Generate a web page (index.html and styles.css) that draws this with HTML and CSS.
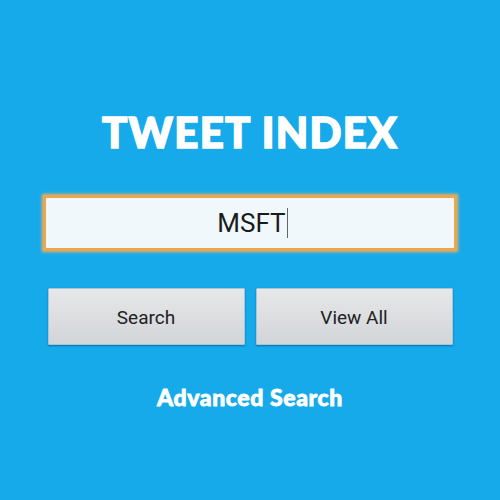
FILE: index.html
```html
<!DOCTYPE html>
<html>
<head>
<meta charset="utf-8">
<link rel="stylesheet" href="styles.css">
</head>
<body>
<main class="screen">
  <h1 class="title">TWEET INDEX</h1>
  <div class="field"><span class="value">MSFT</span><span class="caret"></span></div>
  <div class="actions">
    <button class="btn">Search</button>
    <button class="btn">View All</button>
  </div>
  <a class="advanced">Advanced Search</a>
</main>
</body>
</html>
```
FILE: styles.css
```css
html, body {
  margin: 0;
  padding: 0;
}
body {
  width: 500px;
  height: 500px;
  background: #16aaeb;
  overflow: hidden;
}
.screen {
  display: flex;
  flex-direction: column;
  align-items: center;
  padding-top: 108px;
}
.title {
  margin: 0;
  font-family: "Lato", sans-serif;
  font-weight: 900;
  font-size: 42px;
  line-height: 48px;
  color: #ffffff;
  letter-spacing: 1.3px;
  -webkit-text-stroke: 1.5px #ffffff;
}
.field {
  margin-top: 39px;
  box-sizing: border-box;
  width: 414px;
  height: 56px;
  margin-left: -1px;
  background: #f1f8fc;
  border: 3px solid #eba650;
  box-shadow: 0 0 3px 1px #f2b25b;
  display: flex;
  align-items: center;
  justify-content: center;
}
.value {
  font-family: "Roboto", sans-serif;
  font-size: 26px;
  color: #1b1b1b;
  padding-left: 6px;
}
.caret {
  width: 1px;
  height: 30px;
  background: #666;
  margin-left: 1px;
}
.actions {
  margin-top: 37px;
  display: flex;
  gap: 11px;
}
.btn {
  width: 197px;
  height: 57px;
  border: 1px solid #a9c4d2;
  border-radius: 1px;
  background: linear-gradient(#e6e7e9, #d2d5d8);
  box-shadow: 0 1px 2px rgba(0, 40, 80, 0.45);
  font-family: "Roboto", sans-serif;
  font-size: 19px;
  color: #222;
  padding: 0 0 0 0;
  line-height: 57px;
}
.advanced {
  margin-top: 38px;
  font-family: "Lato", sans-serif;
  font-weight: 900;
  font-size: 23px;
  color: #ffffff;
  letter-spacing: 0.6px;
  -webkit-text-stroke: 0.8px #ffffff;
}
```
